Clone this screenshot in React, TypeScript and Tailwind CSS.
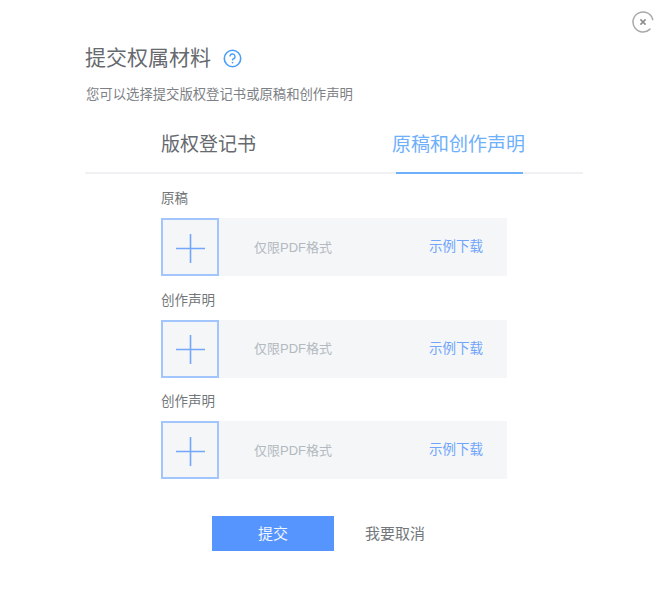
import { useState } from "react";

const uploads = ["原稿", "创作声明", "创作声明"];

const UploadRow = ({ label }: { label: string }) => {
  return (
    <div className="h-[101.5px]">
      <div className="h-[37px] text-[13.5px] leading-[36px] text-[#73777b]">{label}</div>
      <div className="flex h-[58px] w-[346px] items-center bg-[#f4f6f8]">
        <button className="flex h-[58px] w-[58px] shrink-0 items-center justify-center border-2 border-[#a3c5fe]">
          <svg className="translate-y-px" width="29" height="29" viewBox="0 0 29 29" fill="none" stroke="#74a6fb" strokeWidth="1.6">
            <path d="M14.5 0V29M0 14.5H29" />
          </svg>
        </button>
        <span className="ml-[35px] mt-[1px] text-[13px] text-[#b3b9bf]">仅限PDF格式</span>
        <a className="ml-auto mr-[24px] mt-[1px] text-[13.5px] text-[#6fa5fb]">示例下载</a>
      </div>
    </div>
  );
};

const App = () => {
  const [tab] = useState(1);

  return (
    <div className="relative h-[614px] w-[667px] overflow-hidden bg-white pl-[85px] font-['Liberation_Sans','Noto_Sans_CJK_SC',sans-serif]">
      {/* 关闭按钮 */}
      <button className="absolute left-[632px] top-[11px]">
        <svg width="22" height="22" viewBox="0 0 22 22" fill="none" stroke="#a8a8a8" strokeWidth="1.5">
          <path d="M18 18.1A10 10 0 1 1 20.7 8.5" strokeLinecap="round" />
          <path d="M8.4 8.4L13.6 13.6M13.6 8.4L8.4 13.6" stroke="#8e8e8e" strokeWidth="1.6" />
        </svg>
      </button>

      <div className="flex items-start pt-[40px]">
        <h1 className="mt-[2px] text-[21px] leading-[32px] text-[#666a6e]">提交权属材料</h1>
        <svg className="ml-[12px] mt-[8.5px]" width="19" height="19" viewBox="0 0 19 19" fill="none">
          <circle cx="9.5" cy="9.5" r="8.2" stroke="#4a9efa" strokeWidth="1.6" />
          <path d="M7 7.5A2.5 2.5 0 1 1 10.2 9.9C9.6 10.2 9.5 10.6 9.5 11.4" stroke="#4a9efa" strokeWidth="1.4" />
          <circle cx="9.5" cy="13.6" r="0.9" fill="#4a9efa" />
        </svg>
      </div>

      <p className="ml-[1px] mt-[11px] w-max text-[13.35px] leading-[20px] text-[#7d8185]">您可以选择提交版权登记书或原稿和创作声明</p>

      {/* 切换标签 */}
      <div className="mt-[18px] flex h-[51px] w-[498px] border-b-2 border-[#f0f1f2] pl-[76px]">
        <div className={`h-[50px] text-[19px] leading-[44px] ${tab === 0 ? "text-[#6fb0fb]" : "text-[#666a6e]"}`}>版权登记书</div>
        <div className="ml-[136px] h-[50px]">
          <div className={`text-[19px] leading-[44px] ${tab === 1 ? "text-[#6fb0fb]" : "text-[#666a6e]"}`}>原稿和创作声明</div>
          <div className="ml-[4px] mt-[5px] h-[2px] w-[127px] bg-[#6fb0fb]" />
        </div>
      </div>

      <div className="ml-[76px] mt-[7px]">
        {uploads.map((label, i) => (
          <UploadRow key={i} label={label} />
        ))}
      </div>

      <div className="ml-[127px] mt-[30.5px] flex items-center">
        <button className="h-[35px] w-[122px] bg-[#5695fe] pt-[1px] text-[15px] text-[#f2f6ff]">提交</button>
        <button className="ml-[31px] mt-[2px] text-[15px] text-[#73777b]">我要取消</button>
      </div>
    </div>
  );
};

export default App;
